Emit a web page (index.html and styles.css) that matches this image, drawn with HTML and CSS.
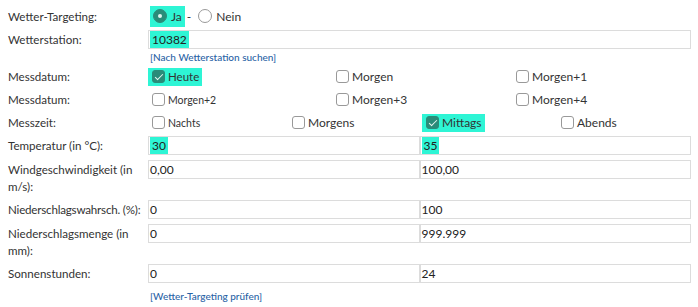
FILE: index.html
```html
<!DOCTYPE html>
<html lang="de">
<head>
<meta charset="utf-8">
<link rel="stylesheet" href="styles.css">
</head>
<body>
<div class="form">
  <div class="row row-radio">
    <div class="label">Wetter-Targeting:</div>
    <div class="field">
      <span class="opt hl"><span class="radio on"></span>Ja</span><span class="dash">-</span>
      <span class="opt"><span class="radio"></span>Nein</span>
    </div>
  </div>
  <div class="row row-input">
    <div class="label">Wetterstation:</div>
    <div class="field"><div class="input full"><span class="hl sel">10382</span></div></div>
  </div>
  <div class="row row-link">
    <div class="label"></div>
    <div class="field"><a class="link">[Nach Wetterstation suchen]</a></div>
  </div>
  <div class="row row-check">
    <div class="label">Messdatum:</div>
    <div class="field cols3">
      <span class="opt hl mid"><span class="box on"></span>Heute</span>
      <span class="opt"><span class="box"></span>Morgen</span>
      <span class="opt"><span class="box"></span>Morgen+1</span>
    </div>
  </div>
  <div class="row row-check">
    <div class="label">Messdatum:</div>
    <div class="field cols3">
      <span class="opt small"><span class="box"></span>Morgen+2</span>
      <span class="opt"><span class="box"></span>Morgen+3</span>
      <span class="opt"><span class="box"></span>Morgen+4</span>
    </div>
  </div>
  <div class="row row-check">
    <div class="label">Messzeit:</div>
    <div class="field cols4">
      <span class="opt small"><span class="box"></span>Nachts</span>
      <span class="opt"><span class="box"></span>Morgens</span>
      <span class="opt hl"><span class="box on"></span>Mittags</span>
      <span class="opt"><span class="box"></span>Abends</span>
    </div>
  </div>
  <div class="row row-input">
    <div class="label">Temperatur (in °C):</div>
    <div class="field pair">
      <div class="input"><span class="hl sel">30</span></div>
      <div class="input"><span class="hl sel">35</span></div>
    </div>
  </div>
  <div class="row row-input">
    <div class="label">Windgeschwindigkeit (in m/s):</div>
    <div class="field pair">
      <div class="input">0,00</div>
      <div class="input">100,00</div>
    </div>
  </div>
  <div class="row row-input">
    <div class="label nowrap">Niederschlagswahrsch. (%):</div>
    <div class="field pair">
      <div class="input">0</div>
      <div class="input">100</div>
    </div>
  </div>
  <div class="row row-input">
    <div class="label">Niederschlagsmenge (in mm):</div>
    <div class="field pair">
      <div class="input">0</div>
      <div class="input">999.999</div>
    </div>
  </div>
  <div class="row row-input">
    <div class="label">Sonnenstunden:</div>
    <div class="field pair">
      <div class="input">0</div>
      <div class="input">24</div>
    </div>
  </div>
  <div class="row row-link2">
    <div class="label"></div>
    <div class="field"><a class="link">[Wetter-Targeting prüfen]</a></div>
  </div>
</div>
</body>
</html>
```
FILE: styles.css
```css
* { box-sizing: border-box; }
body {
  margin: 0;
  padding: 4px 7px 0 8px;
  font-family: Lato, "Open Sans", sans-serif;
  font-size: 12px;
  color: #333;
  background: #fff;
}
.row {
  display: grid;
  grid-template-columns: 140px 1fr;
}
.label {
  line-height: 17px;
  font-size: 11.6px;
  padding-right: 0;
}
.nowrap { white-space: nowrap; letter-spacing: -0.2px; }
.row-radio { height: 24px; align-items: center; }
.row-radio .field { display: flex; align-items: center; padding-left: 2px; }
.dash { margin: 0 4px 0 2px; }
.opt {
  display: inline-flex;
  align-items: center;
  height: 18px;
  padding: 0 3px;
  white-space: nowrap;
}
.row-radio .opt { height: 21px; }
.hl { background: #2ef5d5; }
.radio {
  width: 14px; height: 14px;
  border-radius: 50%;
  border: 1px solid #999;
  background: #fff;
  margin-right: 4px;
  position: relative;
}
.radio.on { background: #2a8c79; border-color: #2a8c79; }
.radio.on::after {
  content: ""; position: absolute; left: 4px; top: 4px;
  width: 4px; height: 4px; border-radius: 50%; background: #e0f5f0;
}
.box {
  width: 13px; height: 13px;
  border-radius: 3px;
  border: 1px solid #999;
  background: #fff;
  margin-right: 3px;
  position: relative;
  flex: none;
}
.box.on { background: #2a8c79; border-color: #2a8c79; }
.box.on::after {
  content: ""; position: absolute; left: 4px; top: 1px;
  width: 3px; height: 7px;
  border: solid #e8f8f4; border-width: 0 1.5px 1.5px 0;
  transform: rotate(45deg);
}
.row-input { margin-top: 2px; }
.row-input + .row-input { margin-top: 5px; }
.row-input .label { padding-top: 1px; }
.input {
  height: 19px;
  border: 1px solid #dcdcdc;
  padding: 1px 2px 0 1px;
  line-height: 16px;
  font-size: 12px;
  color: #222;
  white-space: nowrap;
}
.sel { display: inline-block; padding: 0 2px; height: 17px; margin-top: -1px; line-height: 17px; }
.pair { display: grid; grid-template-columns: 1fr 1fr; }
.row-link { height: 16px; align-items: center; }
.row-link2 { height: 20px; align-items: end; }
.link {
  color: #2a63a5;
  font-size: 10px;
  font-weight: 500;
  padding-left: 2px;
  line-height: 14px;
  display: block;
}
.row-check { height: 23px; align-items: center; }
.row-check + .row-check { height: 23px; }
.cols3 { display: grid; grid-template-columns: 184px 180px 1fr; align-items: center; }
.cols4 { display: grid; grid-template-columns: 140px 134px 135px 1fr; align-items: center; }
.cols3 .opt, .cols4 .opt { justify-self: start; padding-left: 4px; }
.small { font-size: 10.5px; }
.mid { font-size: 11.5px; }
```
